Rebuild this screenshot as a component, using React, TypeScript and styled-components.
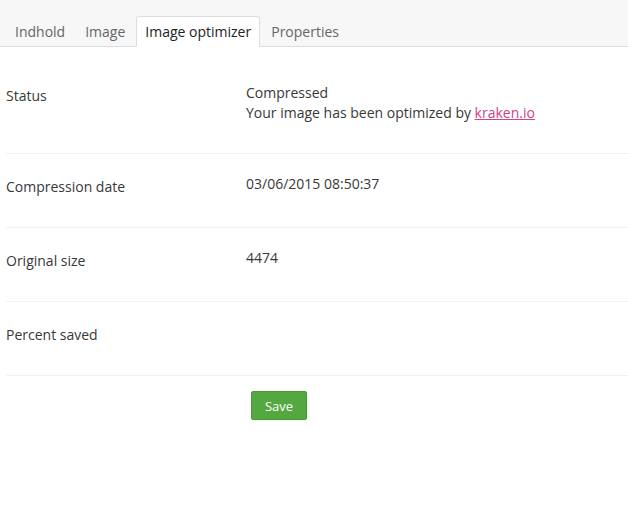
import React from "react";
import styled, { createGlobalStyle } from "styled-components";

const Global = createGlobalStyle`
  html, body { margin: 0; padding: 0; background: #fff; }
  body { font-family: "Open Sans", "Liberation Sans", sans-serif; font-size: 14px; line-height: 20px; color: #383838; }
`;

const Header = styled.div`
  background: #f7f7f7;
  border-bottom: 1px solid #dddddd;
  height: 46px;
  display: flex;
  align-items: flex-end;
  padding-left: 6px;
`;

const Tabs = styled.ul`
  display: flex;
  list-style: none;
  margin: 0 0 -1px 0;
  padding: 0;
  gap: 2px;
`;

const Tab = styled.li<{ $active?: boolean }>`
  height: 31px;
  box-sizing: border-box;
  padding: 0 8px;
  display: flex;
  align-items: center;
  font-size: 14px;
  color: ${(p) => (p.$active ? "#222" : "#666")};
  background: ${(p) => (p.$active ? "#fff" : "transparent")};
  border: 1px solid ${(p) => (p.$active ? "#dddddd" : "transparent")};
  border-bottom-color: ${(p) => (p.$active ? "#fff" : "transparent")};
  border-radius: 3px 3px 0 0;
`;

const Content = styled.div`
  padding: 16px 0 0 6px;
`;

const Row = styled.div`
  display: flex;
  padding: 20px 0 30px;
  border-bottom: 1px solid #f2f2f2;
`;

const Label = styled.div`
  width: 240px;
  flex: none;
  padding-top: 3px;
`;

const Value = styled.div`
  min-height: 23px;
`;

const Link = styled.a`
  color: #d1428b;
  text-decoration: underline;
`;

const Actions = styled.div`
  padding: 15px 0 0 245px;
`;

const SaveButton = styled.button`
  width: 56px;
  height: 29px;
  background: #53a93f;
  border: 1px solid #4b9a38;
  border-radius: 2px;
  color: #fff;
  font-family: "Open Sans", "Liberation Sans", sans-serif;
  font-size: 13px;
  padding: 0;
  cursor: pointer;
`;

const rows: { label: string; value: React.ReactNode }[] = [
  {
    label: "Status",
    value: (
      <>
        Compressed
        <br />
        Your image has been optimized by <Link href="#">kraken.io</Link>
      </>
    ),
  },
  { label: "Compression date", value: "03/06/2015 08:50:37" },
  { label: "Original size", value: "4474" },
  { label: "Percent saved", value: "" },
];

export default function App() {
  return (
    <>
      <Global />
      <Header>
        <Tabs>
          <Tab>Indhold</Tab>
          <Tab>Image</Tab>
          <Tab $active>Image optimizer</Tab>
          <Tab>Properties</Tab>
        </Tabs>
      </Header>
      <Content>
        {rows.map((r) => (
          <Row key={r.label}>
            <Label>{r.label}</Label>
            <Value>{r.value}</Value>
          </Row>
        ))}
        <Actions>
          <SaveButton>Save</SaveButton>
        </Actions>
      </Content>
    </>
  );
}
